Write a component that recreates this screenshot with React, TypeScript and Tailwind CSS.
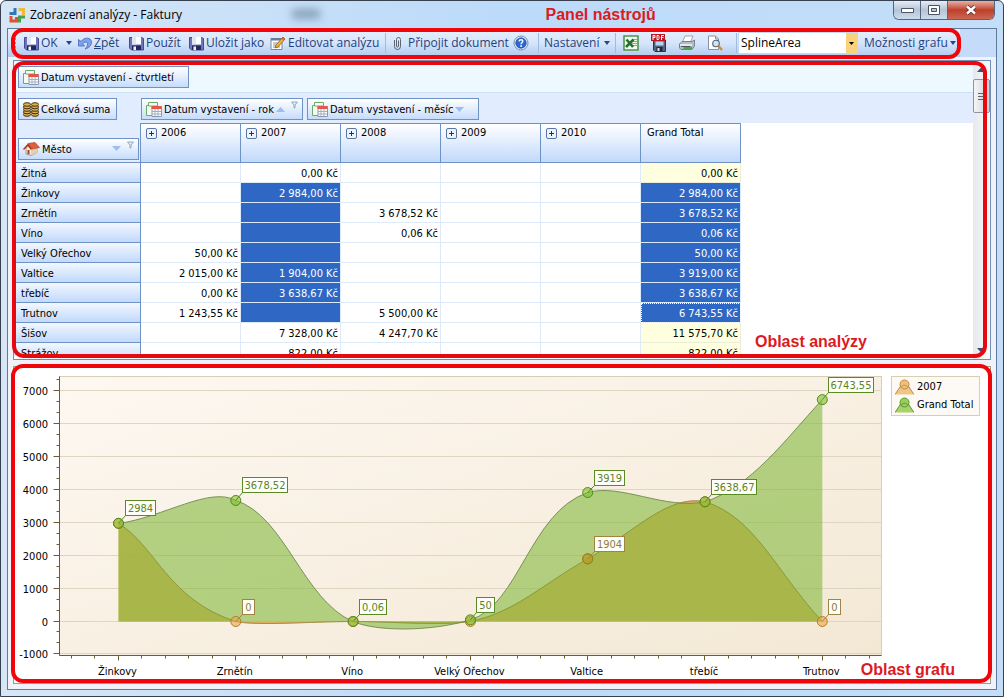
import type { ReactNode } from "react";

const uiFont = "font-['Open_Sans','Noto_Sans',sans-serif]";
const gridFont = "font-['DejaVu_Sans_Condensed','DejaVu_Sans',sans-serif]";

/* ---------- Icons ---------- */

function SaveIcon() {
  return (
    <svg width="15" height="15" viewBox="0 0 15 15" className="shrink-0">
      <path d="M.5 1.500h12l2 1v11.500h-12l-2-2z" fill="#6f76bd" stroke="#474c94" />
      <path d="M3 1h9v7.500H3z" fill="#fff" />
      <path d="M3 1h4v7.500H3z" fill="#dfe5f6" />
      <path d="M3 9.500h9V14H3z" fill="#23285e" />
      <path d="M4.500 10.500h2.500V14H4.500z" fill="#f2f4fb" />
    </svg>
  );
}

function UndoIcon() {
  return (
    <svg width="14" height="14" viewBox="0 0 14 14" className="shrink-0">
      <path d="M.5 3.500v6.500h6L4.600 8C6.500 5.500 9.500 5.500 9.500 8c0 2-.8 3.300-2.500 5 4-1 6.500-3.500 6.500-7C13.500 1.500 6.500.5 3 5.500z" fill="#7fa2ea" stroke="#3f66bd" strokeWidth=".8" />
    </svg>
  );
}

function EditIcon() {
  return (
    <svg width="16" height="15" viewBox="0 0 16 15" className="shrink-0">
      <path d="M1 2.500h11v11H1z" fill="#fff" stroke="#7c8896" />
      <path d="M1 2h11v2.500H1z" fill="#687d9c" />
      <path d="M3 7h6M3 9h5M3 11h7" stroke="#8c98a8" />
      <path d="M13 1l2 2-7 8-3 1 1-3z" fill="#f2b53c" stroke="#8c5a14" strokeWidth=".8" />
      <path d="M13 1l2 2-1.500 1.600-2-2z" fill="#d8604c" />
    </svg>
  );
}

function ClipIcon() {
  return (
    <svg width="9" height="15" viewBox="0 0 9 15" fill="none" stroke="#5b6470" className="shrink-0">
      <path d="M1.500 4v6.500a3 3 0 0 0 6 0V3.500a2 2 0 0 0-4 0V10a1 1 0 0 0 2 0V4.500" />
    </svg>
  );
}

function HelpIcon() {
  return (
    <svg width="16" height="16" viewBox="0 0 16 16">
      <circle cx="8" cy="8" r="7" fill="#eef4fc" stroke="#6f8cb8" />
      <circle cx="8" cy="8" r="5.300" fill="#2c66cf" stroke="#1d479c" strokeWidth=".6" />
      <path d="M6.200 6.500C6.200 4 10 4.200 9.800 6.400 9.700 7.600 8.100 7.600 8.100 9.200" fill="none" stroke="#fff" strokeWidth="1.400" />
      <circle cx="8.100" cy="11" r=".9" fill="#fff" />
    </svg>
  );
}

function ExcelIcon() {
  return (
    <svg width="16" height="16" viewBox="0 0 16 16">
      <path d="M1 1h14v14H1z" fill="#f4faf2" stroke="#4c964a" strokeWidth="1.600" />
      <path d="M9 4.500h5M9 6.500h5M9 8.500h5M9 10.500h5" stroke="#7fb27c" />
      <path d="M3.500 4.500l6.500 7.500M10.500 4.500L3 12" stroke="#23702c" strokeWidth="2.600" />
    </svg>
  );
}

function PdfIcon() {
  return (
    <svg width="16" height="18" viewBox="0 0 16 18">
      <path d="M2.500 6h12v11.500H4l-1.500-1.500z" fill="#56627e" stroke="#2b334c" />
      <path d="M4.500 7.500h8v4h-8z" fill="#b4d6f4" />
      <path d="M5.500 13h6v4.500h-6z" fill="#20263c" />
      <path d="M6.500 14h2v3h-2z" fill="#dfe4ec" />
      <path d="M0 0h14v7H0z" fill="#b81822" />
      <path d="M2 6V1.500h2v2H2M6 1.500v4h1.500l.5-1v-2l-.5-1zM10.500 6V1.500H13M10.500 3.500h2" fill="none" stroke="#fff" />
    </svg>
  );
}

function PrinterIcon() {
  return (
    <svg width="16" height="16" viewBox="0 0 16 16">
      <path d="M6 1h8l-2.500 6H3.500z" fill="#fff" stroke="#8a929c" strokeWidth=".8" />
      <path d="M.5 9L3 6.500h10L15.500 5v6L13 14.500H2L.5 13z" fill="#b4bcc6" stroke="#66707c" strokeWidth=".8" />
      <path d="M1 9h12v2H1z" fill="#e4e8ee" />
      <path d="M5 11.500h8v3H4z" fill="#45a84c" />
      <path d="M2 11.500h9" stroke="#4c5560" />
    </svg>
  );
}

function PreviewIcon() {
  return (
    <svg width="16" height="16" viewBox="0 0 16 16">
      <path d="M1.500 1h7l3 3v10.500h-10z" fill="#fff" stroke="#8492a8" />
      <path d="M8.500 1v3h3" fill="none" stroke="#8492a8" />
      <circle cx="9" cy="8.500" r="3.300" fill="#cfe4f6" stroke="#52647c" strokeWidth="1.100" />
      <path d="M11.500 11l3.500 4" stroke="#d88a2e" strokeWidth="2.200" />
    </svg>
  );
}

function AppIcon() {
  return (
    <svg width="17" height="16" viewBox="0 0 17 16" fill="none" strokeWidth="3">
      <path d="M6 1v5.500H.5" stroke="#2f78b8" />
      <path d="M9.500 2.500h5V8" stroke="#f0b93c" />
      <path d="M2 9v5h5.500V10" stroke="#e0542c" />
      <path d="M16 10h-5.500v5.500" stroke="#4b9e4c" />
    </svg>
  );
}

function CalendarIcon() {
  return (
    <svg width="16" height="15" viewBox="0 0 16 15" className="shrink-0">
      <path d="M.5 3.500h8v10h-8z" fill="#f4fbf0" stroke="#6cab62" />
      <path d="M2.500.5h9v3.500h-9z" fill="#fff" stroke="#6cab62" />
      <path d="M6 4.500h9.500v10H6z" fill="#fff" stroke="#8c98ac" />
      <path d="M5.500 4h10v3h-10z" fill="#e0584a" />
      <path d="M6 9.500h9M6 12h9M9 7v7M12 7v7" stroke="#a2aec2" />
    </svg>
  );
}

function CoinsIcon() {
  return (
    <svg width="16" height="15" viewBox="0 0 16 15" className="shrink-0">
      {[4, 12].map((cx) =>
        [12.500, 10, 7.500, 5, 2.500].map((cy) => (
          <ellipse key={`${cx}-${cy}`} cx={cx} cy={cy} rx="3.600" ry="1.800" fill="#d9b050" stroke="#46300a" />
        ))
      )}
    </svg>
  );
}

function HouseIcon() {
  return (
    <svg width="17" height="14" viewBox="0 0 17 14" className="shrink-0">
      <path d="M3 6v6l5 1.500 6-3V5l-6-3z" fill="#f6e9d6" stroke="#8a6a50" strokeWidth=".6" />
      <path d="M8 7v6.500l6-3V5z" fill="#e2cfb4" />
      <path d="M0 7l5-5.500 4 5L8 8 4.800 4 1 8z" fill="#a83420" />
      <path d="M5 1.500L12 .5l4.500 5L9 7z" fill="#e0603c" stroke="#a83420" strokeWidth=".6" />
      <path d="M4.500 8h2v4.500l-2-.6z" fill="#8a5030" />
    </svg>
  );
}

function Arrow({ up = false, className = "fill-[#24488c]" }: { up?: boolean; className?: string }) {
  return (
    <svg width="9" height="5" viewBox="0 0 9 5" className={`shrink-0 ${className}`}>
      <path d={up ? "M0 5h9L4.500 0z" : "M0 0h9L4.500 5z"} />
    </svg>
  );
}

function DropArrow() {
  return (
    <svg width="6" height="4" viewBox="0 0 6 4" className="shrink-0 fill-[#24488c]">
      <path d="M0 0h6L3 4z" />
    </svg>
  );
}

function FilterIcon() {
  return (
    <svg width="7" height="8" viewBox="0 0 7 8" className="mb-2 shrink-0">
      <path d="M.5 1h6L4 4v3H3V4z" fill="#e4ecf8" stroke="#93a8cc" />
    </svg>
  );
}

/* ---------- Toolbar ---------- */

function ToolButton({ children, label, className = "" }: { children: ReactNode; label?: string; className?: string }) {
  return (
    <button
      type="button"
      aria-label={label}
      className={`flex h-6 shrink-0 items-center whitespace-nowrap text-[#1f3f80] ${className}`}
    >
      {children}
    </button>
  );
}

function Separator() {
  return <span className="mx-px h-5 w-px shrink-0 bg-[#9dbce4]" />;
}

function Toolbar() {
  return (
    <div className="relative bg-[#c4dcfa]">
      <div className={`mr-9 flex h-7 items-center bg-linear-to-b from-[#e6f0fe] via-[#d6e5fa] to-[#adc9ef] pl-1.5 text-[12px] ${uiFont}`}>
        <span className="mr-1.5 h-4 w-0.5 shrink-0 border-l-2 border-dotted border-[#7c9ccc]" />
        <ToolButton className="w-[38px] gap-0.5 pl-0.5"><SaveIcon />OK</ToolButton>
        <ToolButton label="OK – další volby" className="w-[18px] justify-center"><DropArrow /></ToolButton>
        <ToolButton className="w-[51px] gap-0.5">
          <UndoIcon />
          <span><u>Z</u>pět</span>
        </ToolButton>
        <ToolButton className="w-[60px] gap-0.5"><SaveIcon />Použít</ToolButton>
        <ToolButton className="w-[81px] gap-0.5"><SaveIcon />Uložit jako</ToolButton>
        <ToolButton className="w-[114px] gap-0.5"><EditIcon />Editovat analýzu</ToolButton>
        <Separator />
        <ToolButton className="w-[122px] gap-1.5 pl-1.5"><ClipIcon />Připojit dokument</ToolButton>
        <ToolButton label="Nápověda" className="w-[28px] pl-1"><HelpIcon /></ToolButton>
        <Separator />
        <ToolButton className="w-[74px] gap-1 pl-1">Nastavení <DropArrow /></ToolButton>
        <Separator />
        <ToolButton label="Export do Excelu" className="w-7 justify-center"><ExcelIcon /></ToolButton>
        <ToolButton label="Export do PDF" className="w-7 justify-center"><PdfIcon /></ToolButton>
        <ToolButton label="Tisk" className="w-7 justify-center"><PrinterIcon /></ToolButton>
        <ToolButton label="Náhled" className="w-7 justify-center"><PreviewIcon /></ToolButton>
        <span className="w-1.5" />
        <Separator />
        <div className="relative w-[120px] shrink-0">
          <select
            aria-label="Typ grafu"
            className="block h-[22px] w-full appearance-none border border-[#c4d8f2] bg-white pl-0.5 text-[12px] text-black"
          >
            <option>SplineArea</option>
            <option>Line</option>
            <option>Bar</option>
          </select>
          <span className="pointer-events-none absolute inset-y-px right-px flex w-[11px] items-center justify-center bg-[#fbd27c]">
            <svg width="5" height="3" viewBox="0 0 5 3"><path d="M0 0h5L2.500 3z" /></svg>
          </span>
        </div>
        <ToolButton className="gap-0.5 pl-1.5">Možnosti grafu <DropArrow /></ToolButton>
      </div>
      <div className="pointer-events-none absolute -top-px right-[35px] -bottom-0.5 left-[3px] rounded-xl border-4 border-[#f20408]" />
    </div>
  );
}

/* ---------- Pivot grid ---------- */

const years = ["2006", "2007", "2008", "2009", "2010"];

type Row = { city: string; values: string[]; total: string; selected?: boolean };

const rows: Row[] = [
  { city: "Žitná", values: ["", "0,00 Kč", "", "", ""], total: "0,00 Kč" },
  { city: "Žinkovy", values: ["", "2 984,00 Kč", "", "", ""], total: "2 984,00 Kč", selected: true },
  { city: "Zrnětín", values: ["", "", "3 678,52 Kč", "", ""], total: "3 678,52 Kč", selected: true },
  { city: "Víno", values: ["", "", "0,06 Kč", "", ""], total: "0,06 Kč", selected: true },
  { city: "Velký Ořechov", values: ["50,00 Kč", "", "", "", ""], total: "50,00 Kč", selected: true },
  { city: "Valtice", values: ["2 015,00 Kč", "1 904,00 Kč", "", "", ""], total: "3 919,00 Kč", selected: true },
  { city: "třebíč", values: ["0,00 Kč", "3 638,67 Kč", "", "", ""], total: "3 638,67 Kč", selected: true },
  { city: "Trutnov", values: ["1 243,55 Kč", "", "5 500,00 Kč", "", ""], total: "6 743,55 Kč", selected: true },
  { city: "Šišov", values: ["", "7 328,00 Kč", "4 247,70 Kč", "", ""], total: "11 575,70 Kč" },
  { city: "Strážov", values: ["", "822,00 Kč", "", "", ""], total: "822,00 Kč" },
];

function Field({ icon, label, children, className = "" }: { icon: ReactNode; label: string; children?: ReactNode; className?: string }) {
  return (
    <button
      type="button"
      className={`flex h-[22px] shrink-0 items-center gap-0.5 border border-[#6f92c4] bg-linear-to-b from-white to-[#c6dcfc] px-1 font-normal whitespace-nowrap ${className}`}
    >
      {icon}
      <span className="mr-auto pt-0.5">{label}</span>
      {children}
    </button>
  );
}

function cellTone(selected: boolean, total: boolean) {
  if (selected) return "border-[#dcebfb] bg-[#2f68c4] text-white";
  return total ? "border-[#e8eed8] bg-[#ffffdf]" : "border-[#dceafa] bg-white";
}

function PivotGrid() {
  const head = "border-r border-b border-t border-[#6f92c4] bg-linear-to-b from-white to-[#c2d9fb] px-1.5 pt-0.5 text-left align-top font-normal";
  return (
    <table className="w-[727px] table-fixed border-separate border-spacing-0">
      <thead>
        <tr className="h-10">
          <th className="w-[127px] border-r border-b border-[#6f92c4] bg-[#e1edfe] p-0 pr-px pl-1">
            <Field icon={<HouseIcon />} label="Město" className="mt-3 w-full">
              <Arrow className="mr-1 fill-[#9dbdf0]" />
              <FilterIcon />
            </Field>
          </th>
          {years.map((year) => (
            <th key={year} scope="col" className={head}>
              <span className="flex items-center gap-1">
                <button
                  type="button"
                  aria-label={`Rozbalit ${year}`}
                  className="-ml-px flex size-[11px] items-center justify-center rounded-xs border border-[#5c76a4] bg-[#edf3fc]"
                >
                  <svg width="5" height="5" viewBox="0 0 5 5"><path d="M0 2.500h5M2.500 0v5" stroke="#1c3462" /></svg>
                </button>
                {year}
              </span>
            </th>
          ))}
          <th scope="col" className={head}>Grand Total</th>
        </tr>
      </thead>
      <tbody>
        {rows.map((row) => (
          <tr key={row.city} className="h-5">
            <th
              scope="row"
              className="border-r border-b border-[#6f92c4] bg-linear-to-b from-[#f2f8ff] to-[#c2d9fb] pt-0.5 pb-0 pl-[7px] text-left font-normal"
            >
              {row.city}
            </th>
            {row.values.map((value, i) => (
              <td
                key={years[i]}
                className={`border-r border-b pt-0.5 pr-0.5 pb-0 text-right whitespace-nowrap ${cellTone(!!row.selected && i === 1, false)}`}
              >
                {value}
              </td>
            ))}
            <td
              className={`border-r border-b pt-0.5 pr-0.5 pb-0 text-right whitespace-nowrap ${cellTone(!!row.selected, true)} ${
                row.city === "Trutnov" ? "outline outline-dotted -outline-offset-1 outline-white" : ""
              }`}
            >
              {row.total}
            </td>
          </tr>
        ))}
      </tbody>
    </table>
  );
}

function AnalysisPanel() {
  return (
    <section className="relative mx-[5px] mt-[3px]">
      <div className={`flex h-[300px] overflow-hidden border border-[#6f8fb8] bg-white text-[11px] leading-[14px] ${gridFont}`}>
        <div className="mb-[3px] min-w-0 flex-1 overflow-hidden">
          <div className="h-8 border-b border-[#cfe0f4] bg-[#edf8ff] px-1 pt-[5px]">
            <Field icon={<CalendarIcon />} label="Datum vystavení - čtvrtletí" className="w-[171px]" />
          </div>
          <div className="flex h-[30px] gap-1 bg-[#e1edfe] px-1 pt-[5px]">
            <Field icon={<CoinsIcon />} label="Celková suma" className="mr-5 w-[99px]" />
            <Field icon={<CalendarIcon />} label="Datum vystavení - rok" className="w-[162px]">
              <Arrow up className="mr-1 fill-[#9dbdf0]" />
              <FilterIcon />
            </Field>
            <Field icon={<CalendarIcon />} label="Datum vystavení - měsíc" className="w-[172px]">
              <Arrow className="mr-2.5 fill-[#9dbdf0]" />
            </Field>
          </div>
          <PivotGrid />
        </div>
        <div className="flex w-[17px] shrink-0 flex-col items-center bg-linear-to-r from-[#e6e8ec] to-[#fafafa] py-1.5">
          <Arrow up className="mb-[7px] fill-[#44506a]" />
          <div className="flex h-[34px] w-full flex-col items-center justify-center gap-0.5 rounded-xs border border-[#8c94a4] bg-linear-to-r from-[#f6f6f8] to-[#cdd0d8]">
            <span className="h-px w-2 bg-[#5c6474]" />
            <span className="h-px w-2 bg-[#5c6474]" />
            <span className="h-px w-2 bg-[#5c6474]" />
          </div>
          <Arrow className="mt-auto fill-[#44506a]" />
        </div>
      </div>
      <div className="pointer-events-none absolute top-px right-1 bottom-0.5 -left-px rounded-xl border-4 border-[#e60a10]" />
      <p className="absolute right-[124px] bottom-2 font-['Liberation_Sans',Arial,sans-serif] text-[16px] leading-5 font-bold text-[#dc1a22]">
        Oblast analýzy
      </p>
    </section>
  );
}

/* ---------- Chart ---------- */

const LEFT = 45.5;
const RIGHT = 867.5;
const TOP = 8.5;
const BOTTOM = 287.5;
const ZERO = 253.5;

const yOf = (value: number) => ZERO - (value * 32.9) / 1000;
const xOf = (index: number) => 104.5 + index * 117.3;

const cities = ["Žinkovy", "Zrnětín", "Víno", "Velký Ořechov", "Valtice", "třebíč", "Trutnov"];
const series2007 = [2984, 0, 0, 0, 1904, 3638.67, 0];
const seriesTotal = [2984, 3678.52, 0.06, 50, 3919, 3638.67, 6743.55];

const curve2007 =
  "M104.5 155.500C141 177 154 232 221.800 253.500C244 258 296 253.500 339 253.500C379 253.500 426 258 456.400 253.500C502 244 527 217 573.700 190.900C620 164 654 126 691 133.800C741 149 763 205 808.300 253.500";
const curveTotal =
  "M104.5 155.500C150 149 196 118 221.800 132.500C271 148 289 232 339 253.500C362 263.500 416 264 456.400 251.800C505 237 516 144 573.700 124.600C606 115 651 142 691 133.800C738 118 770 73 808.300 31.600";

type Tag = { i: number; value: number; text: string; width: number; tone: "green" | "brown" };

const tags: Tag[] = [
  { i: 0, value: 2984, text: "2984", width: 30, tone: "green" },
  { i: 1, value: 3678.52, text: "3678,52", width: 45, tone: "green" },
  { i: 1, value: 0, text: "0", width: 12, tone: "brown" },
  { i: 2, value: 0, text: "0,06", width: 27, tone: "green" },
  { i: 3, value: 50, text: "50", width: 18, tone: "green" },
  { i: 4, value: 3919, text: "3919", width: 30, tone: "green" },
  { i: 4, value: 1904, text: "1904", width: 30, tone: "brown" },
  { i: 5, value: 3638.67, text: "3638,67", width: 45, tone: "green" },
  { i: 6, value: 6743.55, text: "6743,55", width: 45, tone: "green" },
  { i: 6, value: 0, text: "0", width: 12, tone: "brown" },
];

function SplineChart() {
  const gridValues = [7000, 6000, 5000, 4000, 3000, 2000, 1000, 0, -1000];
  return (
    <svg viewBox="0 -1 870 316" className={`h-auto min-w-0 flex-1 text-[11px] ${gridFont}`} role="img" aria-label="Graf analýzy">
      <defs>
        <linearGradient id="plot" x1="0" y1="0" x2="1" y2="1">
          <stop offset="0" stopColor="#fef8f2" />
          <stop offset="1" stopColor="#f3e8d4" />
        </linearGradient>
      </defs>
      <rect x={LEFT} y={TOP} width={RIGHT - LEFT} height={BOTTOM - TOP} fill="url(#plot)" stroke="#d8ceb4" />
      {gridValues.map((v) => (
        <g key={v}>
          <path d={`M${LEFT} ${Math.round(yOf(v)) - 0.5}H${RIGHT}`} stroke="#ded5c2" />
          <path d={`M${LEFT - 6} ${Math.round(yOf(v)) - 0.5}h6`} stroke="#6e5a34" />
          <text x="34" y={Math.round(yOf(v)) + 4} textAnchor="end">{v}</text>
        </g>
      ))}
      {Array.from({ length: 26 }, (_, k) => (
        <path key={k} d={`M${LEFT - 3} ${Math.round(yOf(-1000 + (k * 1000) / 3)) - 0.5}h3`} stroke="#6e5a34" />
      ))}

      <path d={`${curve2007}V${ZERO}H104.5Z`} fill="#dca23c" fillOpacity=".8" />
      <path d={curve2007} fill="none" stroke="#b98a58" strokeOpacity=".8" />
      <path d={`${curveTotal}V${ZERO}H104.5Z`} fill="#84b93d" fillOpacity=".6" />
      <path d={curveTotal} fill="none" stroke="#6f8a4c" strokeOpacity=".9" />
      <path d={curve2007} fill="none" stroke="#7d8a2c" strokeOpacity=".5" />

      <path d={`M${LEFT} ${TOP}V${BOTTOM}H${RIGHT}`} fill="none" stroke="#6e5a34" />
      {Array.from({ length: 35 }, (_, k) => (
        <path key={k} d={`M${Math.round(57 + k * 23.46) + 0.5} ${BOTTOM}v${k % 5 === 2 ? 5 : 3}`} stroke="#6e5a34" />
      ))}
      {cities.map((city, i) => (
        <text key={city} x={xOf(i) - 1} y="307" textAnchor="middle">{city}</text>
      ))}

      {series2007.map((v, i) => (
        <circle key={i} cx={xOf(i)} cy={yOf(v)} r="5" fill="#e8a94c" fillOpacity=".6" stroke="#b97a28" />
      ))}
      {seriesTotal.map((v, i) => (
        <circle key={i} cx={xOf(i)} cy={yOf(v)} r="5" fill="#7ec02c" fillOpacity=".6" stroke="#4f8a1c" />
      ))}
      {/* brown marker stays above the green area */}
      <circle cx={xOf(4)} cy={yOf(1904)} r="5" fill="#a89a1c" fillOpacity=".6" stroke="#8a8420" />
      {tags.map((tag) => {
        const x = xOf(tag.i);
        const y = yOf(tag.value);
        const left = Math.round(x + 6) + 0.5;
        const top = Math.max(Math.round(y - 23) + 0.5, TOP);
        const stroke = tag.tone === "green" ? "#5a8a24" : "#a08444";
        return (
          <g key={`${tag.i}-${tag.text}`}>
            <path d={`M${x} ${y}L${left} ${top + 15}`} stroke={stroke} />
            <rect x={left} y={top} width={tag.width} height="15" fill="#fffffa" stroke={stroke} />
            <text x={left + tag.width / 2} y={top + 11.500} textAnchor="middle" fill={tag.tone === "green" ? "#5d8228" : "#8c7a3c"}>
              {tag.text}
            </text>
          </g>
        );
      })}
    </svg>
  );
}

function LegendMark({ fill, stroke }: { fill: string; stroke: string }) {
  return (
    <svg width="19" height="16" viewBox="0 0 19 16">
      <path d="M0 15.500L6 6.500h7l6 9z" fill={fill} fillOpacity=".9" />
      <path d="M0 15.500L7 5M19 15.500L12 5" stroke={stroke} />
      <circle cx="9.500" cy="5.500" r="4.500" fill={fill} stroke={stroke} />
      <path d="M6 8.500C7.500 5.500 11.500 5.500 13 8.500" fill="none" stroke={stroke} />
    </svg>
  );
}

function ChartPanel() {
  return (
    <section className="relative mx-[5px] mt-1.5 mb-[5px]">
      <div className="flex items-start border border-[#a09a88] bg-white">
        <SplineChart />
        <ul className={`mt-[9px] mr-2.5 ml-[7px] w-[89px] shrink-0 border border-[#d8ceb4] bg-[#fdf9f4] py-px pl-[3px] text-[11px] ${gridFont}`}>
          <li className="flex h-[18px] items-center gap-[3px] whitespace-nowrap"><LegendMark fill="#eec07c" stroke="#c08a44" />2007</li>
          <li className="flex h-[18px] items-center gap-[3px] whitespace-nowrap"><LegendMark fill="#9ccc5c" stroke="#5a9a2c" />Grand Total</li>
        </ul>
      </div>
      <div className="pointer-events-none absolute -top-0.5 -right-px bottom-px -left-0.5 rounded-xl border-4 border-[#ee060a]" />
      <p className="absolute right-[36px] bottom-1 font-['Liberation_Sans',Arial,sans-serif] text-[16px] leading-5 font-bold text-[#dc1a22]">
        Oblast grafu
      </p>
    </section>
  );
}

/* ---------- Window ---------- */

function TitleBar() {
  const control = "flex h-full items-center justify-center";
  return (
    <header className="relative flex h-[27px] items-start justify-between">
      {/* blurred text of the window behind the glass */}
      <span className="absolute top-2 left-[285px] h-2.5 w-7 bg-[#5f7893] opacity-60 blur-xs" />
      <h1 className={`flex items-center gap-1 pt-1.5 pl-0.5 text-[12px] leading-4 text-black ${uiFont}`}>
        <AppIcon />
        Zobrazení analýzy - Faktury
      </h1>
      <p className="absolute top-1 left-[54.4%] font-['Liberation_Sans',Arial,sans-serif] text-[16px] leading-5 font-bold text-[#dc1a22]">
        Panel nástrojů
      </p>
      <div className="mr-0.5 flex h-[19px] overflow-hidden rounded-b-md border border-t-0 border-[#55657c]">
        <button type="button" aria-label="Minimalizovat" className={`${control} w-[27px] border-r border-[#55657c] bg-linear-to-b from-[#e6edf5] via-[#b4c4d6] to-[#cddcec]`}>
          <svg width="13" height="5" viewBox="0 0 13 5"><path d="M.5.5h12v4H.5z" fill="#fff" stroke="#4a5464" /></svg>
        </button>
        <button type="button" aria-label="Maximalizovat" className={`${control} w-[27px] border-r border-[#55657c] bg-linear-to-b from-[#e6edf5] via-[#b4c4d6] to-[#cddcec]`}>
          <svg width="12" height="10" viewBox="0 0 12 10"><path d="M.5.5h11v9H.5zM3.500 3.500h5v3h-5z" fill="#fff" stroke="#4a5464" fillRule="evenodd" /></svg>
        </button>
        <button type="button" aria-label="Zavřít" className={`${control} w-[46px] bg-linear-to-b from-[#e6b0a4] via-[#bc3f2a] to-[#cc6650]`}>
          <svg width="12" height="10" viewBox="0 0 12 10">
            <path d="M2 1.500l8 7M10 1.500l-8 7" stroke="#5a2a28" strokeWidth="4" />
            <path d="M2 1.500l8 7M10 1.500l-8 7" stroke="#fff" strokeWidth="2.400" />
          </svg>
        </button>
      </div>
    </header>
  );
}

export default function App() {
  return (
    <div className="min-h-screen rounded-t-md border border-[#36404e] bg-linear-to-r from-[#d6e6f6] via-[#bcdafa] to-[#c4def8] px-1.5 pb-1.5 text-black">
      <TitleBar />
      <main className="border border-[#5f7c9c] bg-[#eff3f9]">
        <Toolbar />
        <AnalysisPanel />
        <ChartPanel />
      </main>
    </div>
  );
}
